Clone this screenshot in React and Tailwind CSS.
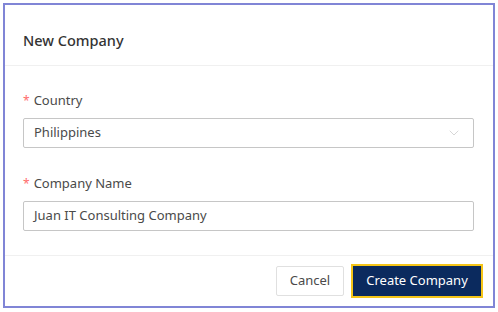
import { ChevronDown } from "lucide-react";

const font = { fontFamily: '"Segoe UI", "Noto Sans", Lato, sans-serif' };

function Field({ label, children }) {
  return (
    <div className="flex flex-col">
      <label className="flex items-center h-[22px] text-[13px] text-[#4a4a4a]">
        <span className="text-[#ff6b6b] mr-[4px] text-[12px]">*</span>
        {label}
      </label>
      <div className="mt-[6px]">{children}</div>
    </div>
  );
}

export default function App() {
  return (
    <div className="w-[498px] h-[312px] bg-white p-[3px]" style={font}>
      <div className="h-[305px] border-2 border-[#8085d6] flex flex-col bg-white">
        {/* Header */}
        <div className="h-[61px] px-[18px] pt-[24px] border-b border-[#f0f0f0]">
          <h2 className="text-[14.5px] leading-[22px] font-medium text-[#333]">New Company</h2>
        </div>

        {/* Body */}
        <div className="px-[18px] pt-[24px] pb-[24px] flex flex-col gap-[25px] border-b border-[#f0f0f0]">
          <Field label="Country">
            <div className="h-[30px] w-[451px] border border-[#c6c6c6] rounded-[2px] flex items-center justify-between pl-[10px] pr-[11px] text-[13px] text-[#4a4a4a]">
              <span>Philippines</span>
              <ChevronDown className="w-[16px] h-[16px] text-[#c8c8c8]" strokeWidth={1.1} />
            </div>
          </Field>
          <Field label="Company Name">
            <div className="h-[30px] w-[451px] border border-[#c6c6c6] rounded-[2px] flex items-center pl-[10px] text-[13px] text-[#4a4a4a]">
              Juan IT Consulting Company
            </div>
          </Field>
        </div>

        {/* Footer */}
        <div className="flex-1 flex items-center justify-end gap-[7px] pr-[10px]">
          <button className="h-[30px] w-[68px] border border-[#e0e0e0] rounded-[2px] bg-white text-[13px] text-[#4a4a4a]">
            Cancel
          </button>
          <button className="h-[34px] w-[132px] border-2 border-[#f5c518] bg-[#0b2a5e] text-white text-[13px]">
            Create Company
          </button>
        </div>
      </div>
    </div>
  );
}
